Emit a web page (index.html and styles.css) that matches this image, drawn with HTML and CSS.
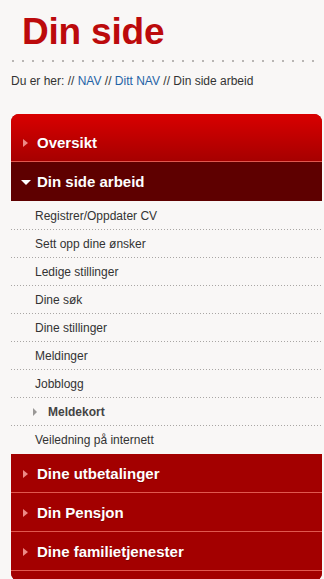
FILE: index.html
```html
<!DOCTYPE html>
<html lang="no">
<head>
<meta charset="utf-8">
<title>Din side</title>
<link rel="stylesheet" href="styles.css">
</head>
<body>
<div class="page">
  <h1 class="title">Din side</h1>
  <div class="rule"></div>
  <p class="crumbs">Du er her: // <a href="#">NAV</a> // <a href="#">Ditt NAV</a> // Din side arbeid</p>
  <nav class="menu">
    <a class="head head-first" href="#"><span class="arr-right"></span>Oversikt</a>
    <a class="head head-open" href="#"><span class="arr-down"></span>Din side arbeid</a>
    <ul class="sub">
      <li><a href="#">Registrer/Oppdater CV</a></li>
      <li><a href="#">Sett opp dine ønsker</a></li>
      <li><a href="#">Ledige stillinger</a></li>
      <li><a href="#">Dine søk</a></li>
      <li><a href="#">Dine stillinger</a></li>
      <li><a href="#">Meldinger</a></li>
      <li><a href="#">Jobblogg</a></li>
      <li class="sub-group"><a href="#"><span class="arr-grey"></span>Meldekort</a></li>
      <li class="last"><a href="#">Veiledning på internett</a></li>
    </ul>
    <a class="head" href="#"><span class="arr-right"></span>Dine utbetalinger</a>
    <a class="head" href="#"><span class="arr-right"></span>Din Pensjon</a>
    <a class="head" href="#"><span class="arr-right"></span>Dine familietjenester</a>
    <div class="foot"></div>
  </nav>
</div>
</body>
</html>
```

FILE: styles.css
```css
html, body {
  margin: 0;
  padding: 0;
  background: #f9f7f6;
}
body {
  font-family: "Liberation Sans", Arial, sans-serif;
  color: #333;
}
.page {
  padding: 11px 2px 0 11px;
}
.title {
  margin: 0;
  padding-left: 11px;
  font-size: 37px;
  line-height: 42px;
  font-weight: bold;
  color: #bc0a0c;
  letter-spacing: -0.2px;
}
.rule {
  margin-top: 7px;
  height: 2px;
  background-image: linear-gradient(to right, #b9b6b4 0 2px, transparent 2px 10px);
  background-size: 10px 2px;
  background-repeat: repeat-x;
  background-position: 1px 0;
}
.crumbs {
  margin: 12px 0 0 0;
  font-size: 12px;
  line-height: 14px;
  color: #333;
}
.crumbs a {
  color: #1f63a6;
  text-decoration: none;
}
.menu {
  margin-top: 26px;
  border-radius: 8px;
  overflow: hidden;
  background: #a30000;
}
.head {
  display: flex;
  align-items: center;
  height: 38px;
  padding-left: 12px;
  border-bottom: 1px solid #e0584f;
  background: #a30000;
  color: #fff;
  font-size: 15px;
  font-weight: bold;
  text-decoration: none;
  text-shadow: 0 1px 0 rgba(60, 0, 0, 0.35);
}
.head-first {
  height: 38px;
  padding-top: 9px;
  background: linear-gradient(to bottom, #d90000, #a60000);
}
.head-open {
  height: 39px;
  border-bottom: 0;
  background: #5e0000;
  padding-left: 10px;
}
.arr-right {
  width: 0;
  height: 0;
  border-top: 4.5px solid transparent;
  border-bottom: 4.5px solid transparent;
  border-left: 5px solid #ec8a86;
  margin-right: 9px;
  margin-top: 1px;
}
.arr-down {
  width: 0;
  height: 0;
  border-left: 5px solid transparent;
  border-right: 5px solid transparent;
  border-top: 5px solid #fff;
  margin-right: 6px;
  margin-top: 1px;
}
.sub {
  list-style: none;
  margin: 0;
  padding: 1px 0 0 0;
  background: #f9f7f6;
}
.sub li {
  height: 27px;
  padding-bottom: 1px;
  background-image: linear-gradient(to right, #a9a6a4 0 1px, transparent 1px 3px);
  background-size: 3px 1px;
  background-repeat: repeat-x;
  background-position: 0 100%;
}
.sub li.last {
  height: 28px;
  padding-bottom: 0;
  background-image: none;
}
.sub a {
  display: flex;
  align-items: center;
  height: 100%;
  padding-left: 24px;
  font-size: 12px;
  color: #333;
  text-decoration: none;
}
.sub-group a {
  padding-left: 22px;
  font-weight: bold;
  color: #444;
}
.arr-grey {
  width: 0;
  height: 0;
  border-top: 4px solid transparent;
  border-bottom: 4px solid transparent;
  border-left: 4px solid #9a9896;
  margin-right: 11px;
}
.foot {
  height: 10px;
  background: #a30000;
}
```
